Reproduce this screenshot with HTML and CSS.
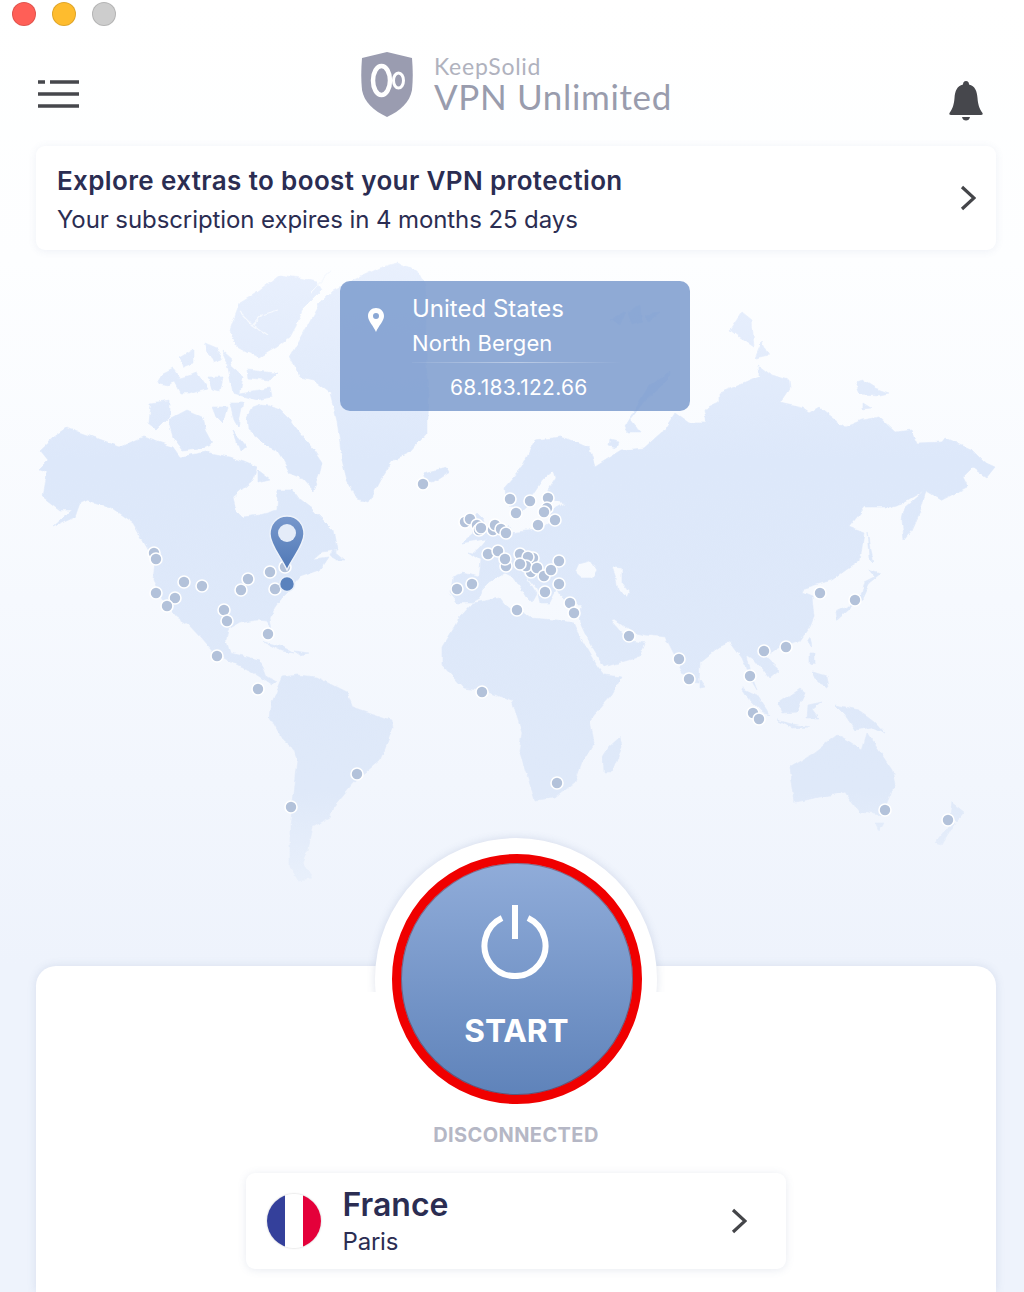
FILE: index.html
```html
<!DOCTYPE html>
<html lang="en">
<head>
<meta charset="utf-8">
<title>VPN Unlimited</title>
<link rel="stylesheet" href="styles.css">
</head>
<body>
<div class="app">
  <svg class="world" viewBox="0 0 1024 1292" aria-hidden="true">
    <defs>
      <linearGradient id="land" gradientUnits="userSpaceOnUse" x1="0" y1="260" x2="0" y2="885">
        <stop offset="0" stop-color="#e9f0fd"/>
        <stop offset=".32" stop-color="#dde8fa"/>
        <stop offset=".85" stop-color="#dfe9f9"/>
        <stop offset="1" stop-color="#e9f0fb"/>
      </linearGradient>
      <linearGradient id="pin" x1="0" y1="0" x2="0" y2="1">
        <stop offset="0" stop-color="#7898cc"/>
        <stop offset="1" stop-color="#4f78b6"/>
      </linearGradient>
      <filter id="coast" filterUnits="userSpaceOnUse" x="0" y="240" width="1024" height="660">
        <feTurbulence type="fractalNoise" baseFrequency=".09" numOctaves="3" seed="7" result="n"/>
        <feDisplacementMap in="SourceGraphic" in2="n" scale="5" xChannelSelector="R" yChannelSelector="G"/>
        <feGaussianBlur stdDeviation=".35"/>
      </filter>
    </defs>
    <g class="land">
      <!-- North and Central America -->
      <path d="M40 450 54 437 67 428 90 436 120 447 143 437 173 447 180 457 205 452 230 457 245 462 257 467 253 480 233 497 236 510 243 517 260 515 277 510 278 490 293 490 300 500 313 510 325 522 333 530 337 550 322 552 313 560 328 558 320 570 300 577 290 590 283 597 276 606 270 617 272 630 267 621 257 620 240 623 228 630 226 640 230 653 248 657 258 660 263 667 267 677 277 682 272 685 257 675 233 663 213 652 200 637 188 624 177 617 168 606 163 600 153 580 155 560 150 553 133 523 110 507 87 500 80 503 75 517 53 527 72 510 60 510 43 497 47 473 38 470 48 460Z"/>
      <path d="M333 550 345 560 337 560 330 556Z"/>
      <path d="M264 642 283 647 294 653 282 651Z"/>
      <path d="M294 651 310 653 300 655Z"/>
      <!-- Arctic islands -->
      <path d="M230 330 240 303 258 292 280 275 300 278 317 282 322 290 302 310 296 326 290 337 277 347 260 357 246 352 237 347Z"/>
      <path d="M247 417 252 408 260 405 270 406 280 410 290 420 300 433 312 448 322 463 318 478 313 490 302 478 290 473 283 460 277 450 265 445 257 437 248 430Z"/>
      <path d="M168 420 187 410 203 417 206 430 213 443 200 448 183 450 173 437Z"/>
      <path d="M150 403 170 400 170 417 157 430 148 423Z"/>
      <path d="M157 383 163 373 173 368 180 377 170 385Z"/>
      <path d="M180 358 193 350 193 363 183 367Z"/>
      <path d="M205 343 217 348 222 360 213 363 207 350Z"/>
      <path d="M222 350 233 360 230 367Z"/>
      <path d="M173 380 197 373 207 388 190 393 180 393Z"/>
      <path d="M208 377 223 377 220 392 212 390Z"/>
      <path d="M227 363 243 377 240 393 270 388 272 397 257 400 233 393Z"/>
      <path d="M247 370 277 373 270 380 248 378Z"/>
      <path d="M213 407 227 407 223 423 217 417Z"/>
      <path d="M230 403 243 403 238 427 234 420Z"/>
      <path d="M233 430 247 447 240 450Z"/>
      <path d="M257 470 270 480 257 483Z"/>
      <!-- Greenland -->
      <path d="M360 277 380 268 397 263 417 270 425 285 427 320 426 360 428 395 427 417 427 433 410 452 393 460 380 480 368 503 358 500 347 480 342 460 337 420 330 393 313 380 300 377 290 357 300 340 320 303 333 290Z"/>
      <!-- Iceland -->
      <path d="M423 473 435 470 447 467 450 472 433 483 426 482Z"/>
      <!-- Eurasia -->
      <path fill-rule="evenodd" d="M535 440 562 437 580 443 589 447 595 467 606 460 622 450 645 448 662 433 675 413 689 423 707 423 704 410 719 403 719 393 745 383 759 377 759 365 772 375 789 380 790 388 780 403 802 408 809 413 819 407 845 427 862 420 879 417 895 432 912 430 917 443 942 442 945 438 972 450 984 462 995 467 987 477 972 467 962 477 967 487 942 500 925 490 902 503 889 507 865 507 849 527 864 533 860 560 832 580 805 588 802 593 812 597 814 617 810 627 799 642 779 648 765 657 779 670 769 678 755 660 747 655 752 677 757 690 751 680 742 658 730 642 719 647 700 662 699 683 689 682 675 657 665 637 645 635 632 632 615 620 612 622 628 640 645 643 639 657 604 667 592 648 581 625 580 612 583 603 565 603 557 588 549 603 541 603 538 590 523 572 537 594 532 603 527 598 515 578 505 573 490 582 482 590 480 598 473 602 457 602 450 593 453 577 463 573 478 577 480 560 468 552 473 553 480 547 490 535 503 533 508 525 512 533 517 532 537 530 553 520 552 510 565 503 552 500 545 495 556 478 554 470 543 480 533 495 528 507 518 516 506 500 505 487 520 470Z M579 563 590 560 597 570 592 578 582 578 575 572Z M612 567 622 568 622 582 630 592 628 597 618 590 616 578Z"/>
      <!-- Islands around Eurasia -->
      <path d="M477 513 484 520 490 538 462 543 473 533 470 522Z"/>
      <path d="M742 312 752 320 754 347 739 337 730 330Z"/>
      <path d="M762 342 769 355 755 358Z"/>
      <path d="M855 382 862 380 875 388 889 393 880 395 860 394Z"/>
      <path d="M862 403 870 408 862 409Z"/>
      <path d="M625 427 635 410 650 385 669 372 668 380 645 400 630 420 640 432 628 432Z"/>
      <path d="M610 440 618 442 616 447 609 445Z"/>
      <path d="M610 320 625 312 620 325Z"/>
      <path d="M628 312 640 306 642 322 632 325Z"/>
      <path d="M645 314 660 312 648 322Z"/>
      <path d="M927 488 905 507 902 520 904 540 912 530 920 512Z"/>
      <path d="M867 532 870 550 873 562 869 558Z"/>
      <path d="M869 570 875 577 865 582 862 593 855 603 835 612 836 620 852 606 862 600 870 582 880 574Z"/>
      <path d="M810 637 812 646 807 642Z"/>
      <path d="M700 680 705 687 700 688Z"/>
      <path d="M810 653 815 653 815 663 810 664Z"/>
      <path d="M813 672 826 676 828 687 818 683Z"/>
      <path d="M742 688 757 695 770 715 763 713 750 700Z"/>
      <path d="M777 720 792 724 810 727 792 728Z"/>
      <path d="M800 688 778 703 783 713 797 712 805 692Z"/>
      <path d="M808 705 822 702 812 710 818 718 807 718Z"/>
      <path d="M835 705 859 710 875 722 885 733 872 727 855 730 845 715Z"/>
      <!-- Africa and Madagascar -->
      <path d="M473 603 500 598 508 608 523 613 530 618 557 620 573 623 575 628 595 663 604 675 622 677 612 695 590 720 594 743 582 763 575 782 555 798 535 800 519 750 522 733 512 700 480 690 463 688 442 665 442 647 460 617Z"/>
      <path d="M620 737 622 747 612 772 604 772 603 757 609 747Z"/>
      <!-- South America -->
      <path d="M272 702 283 677 297 675 317 677 347 692 353 707 392 720 393 728 380 760 353 783 333 807 330 817 313 827 308 850 302 863 312 878 298 880 290 868 290 827 298 760 295 750 283 740 270 717Z"/>
      <!-- Oceania -->
      <path d="M790 767 795 802 845 792 859 812 882 815 895 783 892 770 867 733 862 750 850 742 837 735 814 753Z"/>
      <path d="M875 823 884 823 879 832Z"/>
      <path d="M952 802 965 812 957 822 950 815Z"/>
      <path d="M955 823 942 845 935 843 945 830Z"/>
      <path class="fjord" d="M240 312 253 325 262 315 278 310M253 325 268 335M312 292 332 270"/>
    </g>
    <g class="dots">
      <circle cx="154" cy="553" r="6"/><circle cx="156" cy="559" r="6"/><circle cx="184" cy="582" r="6"/><circle cx="202" cy="586" r="6"/><circle cx="156" cy="593" r="6"/><circle cx="175" cy="598" r="6"/><circle cx="167" cy="606" r="6"/><circle cx="248" cy="579" r="6"/><circle cx="241" cy="590" r="6"/><circle cx="270" cy="572" r="6"/><circle cx="285" cy="567" r="6"/><circle cx="275" cy="589" r="6"/><circle cx="224" cy="610" r="6"/><circle cx="227" cy="621" r="6"/><circle cx="268" cy="634" r="6"/><circle cx="217" cy="656" r="6"/><circle cx="258" cy="689" r="6"/><circle cx="357" cy="774" r="6"/><circle cx="291" cy="807" r="6"/><circle cx="423" cy="484" r="6"/>
      <circle cx="510" cy="499" r="6"/><circle cx="530" cy="501" r="6"/><circle cx="548" cy="498" r="6"/><circle cx="516" cy="513" r="6"/><circle cx="547" cy="508" r="6"/><circle cx="544" cy="512" r="6"/><circle cx="555" cy="520" r="6"/><circle cx="538" cy="525" r="6"/><circle cx="465" cy="522" r="6"/><circle cx="470" cy="519" r="6"/><circle cx="477" cy="525" r="6"/><circle cx="479" cy="530" r="6"/><circle cx="481" cy="528" r="6"/><circle cx="493" cy="530" r="6"/><circle cx="495" cy="525" r="6"/><circle cx="501" cy="529" r="6"/><circle cx="506" cy="533" r="6"/><circle cx="488" cy="554" r="6"/><circle cx="498" cy="551" r="6"/><circle cx="506" cy="566" r="6"/><circle cx="505" cy="559" r="6"/><circle cx="520" cy="554" r="6"/><circle cx="533" cy="558" r="6"/><circle cx="528" cy="557" r="6"/><circle cx="531" cy="572" r="6"/><circle cx="526" cy="566" r="6"/><circle cx="520" cy="564" r="6"/><circle cx="537" cy="568" r="6"/><circle cx="544" cy="576" r="6"/><circle cx="551" cy="570" r="6"/><circle cx="559" cy="561" r="6"/><circle cx="559" cy="584" r="6"/><circle cx="545" cy="592" r="6"/><circle cx="472" cy="584" r="6"/><circle cx="457" cy="589" r="6"/><circle cx="517" cy="610" r="6"/><circle cx="570" cy="603" r="6"/><circle cx="574" cy="613" r="6"/>
      <circle cx="629" cy="636" r="6"/><circle cx="679" cy="659" r="6"/><circle cx="689" cy="679" r="6"/><circle cx="750" cy="676" r="6"/><circle cx="764" cy="651" r="6"/><circle cx="786" cy="647" r="6"/><circle cx="753" cy="713" r="6"/><circle cx="759" cy="719" r="6"/><circle cx="820" cy="593" r="6"/><circle cx="855" cy="600" r="6"/><circle cx="885" cy="810" r="6"/><circle cx="948" cy="820" r="6"/><circle cx="557" cy="783" r="6"/><circle cx="482" cy="692" r="6"/>
    </g>
    <circle class="dot-active" cx="287" cy="584" r="7.500"/>
    <path class="marker" fill="url(#pin)" d="M287 516C276 516 270 525 270 534 270 545 281 557 287 570 293 557 304 545 304 534 304 525 298 516 287 516Z"/>
    <circle class="marker-hole" cx="287" cy="533" r="9"/>
  </svg>

  <div class="titlebar">
    <span class="light light-red"></span>
    <span class="light light-yellow"></span>
    <span class="light light-grey"></span>
  </div>

  <header class="header">
    <svg class="menu" viewBox="0 0 42 28" aria-hidden="true">
      <path d="M0 2H7M12 2H41M0 14H41M0 26H41"/>
    </svg>
    <div class="brand">
      <svg class="shield" viewBox="0 0 54 66" aria-hidden="true">
        <path class="shield-body" d="M27 0 52 6C53 18 53 28 52 38 50 50 40 59 27 65 14 59 4 50 2 38 1 28 1 18 2 6Z"/>
        <ellipse class="shield-loop" cx="21.500" cy="28.500" rx="8.500" ry="14.500" stroke-width="4.500"/>
        <ellipse class="shield-loop" cx="38.500" cy="28.500" rx="5" ry="7.500" stroke-width="3"/>
      </svg>
      <div class="brand-text">
        <div class="brand-top">KeepSolid</div>
        <div class="brand-name">VPN Unlimited</div>
      </div>
    </div>
    <svg class="bell" viewBox="0 0 34 40" aria-hidden="true">
      <path d="M17 0C19 0 20 1.500 20 3.500 26 5 28 10 28.500 17 29 23 30 27 33.500 32 34 33 33.500 34 32 34H2C.5 34 0 33 .5 32 4 27 5 23 5.500 17 6 10 8 5 14 3.500 14 1.500 15 0 17 0Z"/>
      <path d="M13 36H21C20.500 38.500 19 39.500 17 39.500 15 39.500 13.500 38.500 13 36Z"/>
    </svg>
  </header>

  <a class="promo">
    <div class="promo-text">
      <div class="promo-title">Explore extras to boost your VPN protection</div>
      <div class="promo-sub">Your subscription expires in 4 months 25 days</div>
    </div>
    <svg class="chevron" viewBox="0 0 16 26" aria-hidden="true"><path d="M2 2 14 13 2 24"/></svg>
  </a>

  <div class="ipcard">
    <svg class="ipcard-pin" viewBox="0 0 16 24" aria-hidden="true">
      <path fill-rule="evenodd" d="M8 0C3.500 0 0 3.500 0 8 0 13 5.500 18 8 24 10.500 18 16 13 16 8 16 3.500 12.500 0 8 0ZM8 5A3 3 0 1 1 8 11 3 3 0 1 1 8 5Z"/>
    </svg>
    <div class="ipcard-body">
      <div class="ipcard-country">United States</div>
      <div class="ipcard-city">North Bergen</div>
      <div class="ipcard-rule"></div>
      <div class="ipcard-ip">68.183.122.66</div>
    </div>
  </div>

  <section class="panel">
    <div class="notch"></div>
    <button class="start">
      <svg class="power" viewBox="0 0 68 74" aria-hidden="true">
        <path d="M21 13A30.500 30.500 0 1 0 47 13M34 0V34"/>
      </svg>
      <span class="start-label">START</span>
    </button>
    <div class="status">DISCONNECTED</div>
    <a class="location">
      <span class="flag"><i class="flag-blue"></i><i class="flag-white"></i><i class="flag-red"></i></span>
      <span class="location-text">
        <span class="location-country">France</span>
        <span class="location-city">Paris</span>
      </span>
      <svg class="chevron chevron-small" viewBox="0 0 16 26" aria-hidden="true"><path d="M2 2 14 13 2 24"/></svg>
    </a>
  </section>
</div>
</body>
</html>
```
FILE: styles.css
```css
* { box-sizing: border-box; }
html, body { margin: 0; padding: 0; }
body { font-family: Inter, "Liberation Sans", sans-serif; color: #2b2d52; }

.app {
  position: relative;
  width: 1024px;
  height: 1292px;
  overflow: hidden;
  display: flex;
  flex-direction: column;
  background: linear-gradient(180deg, #ffffff 0, #fdfeff 260px, #f6f9fe 600px, #eef3fc 965px);
}

.world { position: absolute; left: 0; top: 0; width: 1024px; height: 1292px; }
.land { filter: url(#coast); }
.land path { fill: url(#land); stroke: url(#land); stroke-width: .6; stroke-linejoin: round; }
.land .fjord { fill: none; stroke: #f6f9fe; stroke-width: 1.2; }
.dots circle { fill: #b3c2da; stroke: #fff; stroke-width: 1.6; }
.dot-active { fill: #5a82bd; stroke: #e8effa; stroke-width: 1.6; }
.marker { stroke: #eef3fb; stroke-width: 1.4; }
.marker-hole { fill: #e4ecf9; }

.titlebar { position: relative; display: flex; gap: 16px; height: 28px; padding-left: 12px; }
.light { width: 24px; height: 24px; margin-top: 2px; border-radius: 50%; border: 1px solid rgba(0,0,0,.12); }
.light-red { background: #ff5f57; }
.light-yellow { background: #febc2e; }
.light-grey { background: #cdcdcd; }

.header {
  position: relative;
  display: flex;
  align-items: center;
  justify-content: space-between;
  height: 118px;
  padding: 0 41px 0 38px;
}
.menu { width: 42px; height: 28px; margin-top: 14px; fill: none; stroke: #46474c; stroke-width: 3.4; }
.brand { display: flex; align-items: center; gap: 20px; margin-top: -4px; margin-left: 3px; }
.shield { width: 54px; height: 66px; }
.shield-body { fill: #9a9cb0; }
.shield-loop { fill: none; stroke: #fff; }
.brand-text { font-family: Lato, "Open Sans", sans-serif; }
.brand-top { font-size: 23px; line-height: 22px; color: #b0b2be; letter-spacing: .75px; }
.brand-name { font-size: 35px; line-height: 38px; color: #999cad; letter-spacing: .65px; }
.bell { width: 34px; height: 40px; margin-top: 28px; fill: #46474c; }

.promo {
  position: relative;
  display: flex;
  align-items: center;
  justify-content: space-between;
  height: 104px;
  margin: 0 28px 0 36px;
  padding: 0 20px 0 21px;
  background: #fff;
  border-radius: 9px;
  box-shadow: 0 1px 8px rgba(80,100,150,.09);
}
.promo-text { padding-top: 5px; }
.promo-title { font-size: 26px; line-height: 32px; font-weight: 600; letter-spacing: .37px; }
.promo-sub { margin-top: 7px; font-size: 24px; line-height: 32px; letter-spacing: -.09px; }
.chevron { width: 16px; height: 26px; fill: none; stroke: #444549; stroke-width: 3.2; }

.ipcard {
  position: relative;
  display: flex;
  width: 350px;
  height: 130px;
  margin: 31px 0 0 340px;
  padding: 14px 0 0 28px;
  border-radius: 10px;
  color: #fff;
  background: rgba(122,154,205,.84);
}
.ipcard-pin { width: 16px; height: 24px; margin-top: 13px; fill: #fff; }
.ipcard-body { margin-left: 28px; flex: 1; }
.ipcard-country { font-size: 24px; line-height: 28px; }
.ipcard-city { margin-top: 5px; font-size: 22px; line-height: 30px; letter-spacing: .1px; }
.ipcard-rule { width: 210px; height: 1px; margin-top: 4px; background: linear-gradient(90deg, rgba(255,255,255,.05), rgba(255,255,255,.4) 50%, rgba(255,255,255,0)); }
.ipcard-ip { margin: 11px 0 0 38px; font-size: 21px; line-height: 28px; letter-spacing: .3px; }

.panel {
  position: relative;
  display: flex;
  flex-direction: column;
  align-items: center;
  flex: 1;
  margin: 555px 28px 0 36px;
  background: #fff;
  border-radius: 20px 20px 0 0;
  box-shadow: 0 0 10px rgba(80,100,150,.14);
}
.notch {
  position: absolute;
  left: 339px;
  top: -128px;
  width: 282px;
  height: 282px;
  border-radius: 50%;
  background: #fff;
  clip-path: inset(-10px -10px 128px -10px);
  box-shadow: 0 0 8px rgba(80,100,150,.18);
}
.start {
  position: absolute;
  left: 356px;
  top: -112px;
  display: flex;
  flex-direction: column;
  align-items: center;
  width: 250px;
  height: 250px;
  padding: 42px 0 0;
  border: 9px solid #f00000;
  border-radius: 50%;
  color: #fff;
  background: linear-gradient(180deg, #90acd9 0, #5f83ba 100%);
  box-shadow: inset 0 0 0 1px rgba(90,0,0,.35);
  font-family: inherit;
}
.power { width: 68px; height: 74px; margin-left: -5px; fill: none; stroke: #fff; stroke-width: 6; }
.start-label { margin-top: 32px; margin-left: -1px; font-size: 31.6px; line-height: 40px; font-weight: 700; }
.status {
  margin-top: 156px;
  font-size: 20px;
  line-height: 26px;
  font-weight: 700;
  color: #b5b7c5;
  letter-spacing: .4px;
}
.location {
  display: flex;
  align-items: center;
  width: 540px;
  height: 96px;
  margin-top: 25px;
  margin-left: -1px;
  padding: 0 39px 0 21px;
  background: #fff;
  border-radius: 9px;
  box-shadow: 0 1px 8px rgba(80,100,150,.13);
}
.flag { display: flex; width: 54px; height: 54px; border-radius: 50%; overflow: hidden; box-shadow: 0 0 2px rgba(0,0,0,.25); }
.flag i { flex: 1; }
.flag-blue { background: #34409b; }
.flag-white { background: #fff; }
.flag-red { background: #e4003a; }
.location-text { display: flex; flex-direction: column; flex: 1; margin-left: 22px; }
.location-country { font-size: 32px; line-height: 40px; font-weight: 600; }
.location-city { margin-top: 1px; font-size: 24px; line-height: 32px; letter-spacing: -.2px; }
.chevron-small { width: 16px; height: 26px; }
```
